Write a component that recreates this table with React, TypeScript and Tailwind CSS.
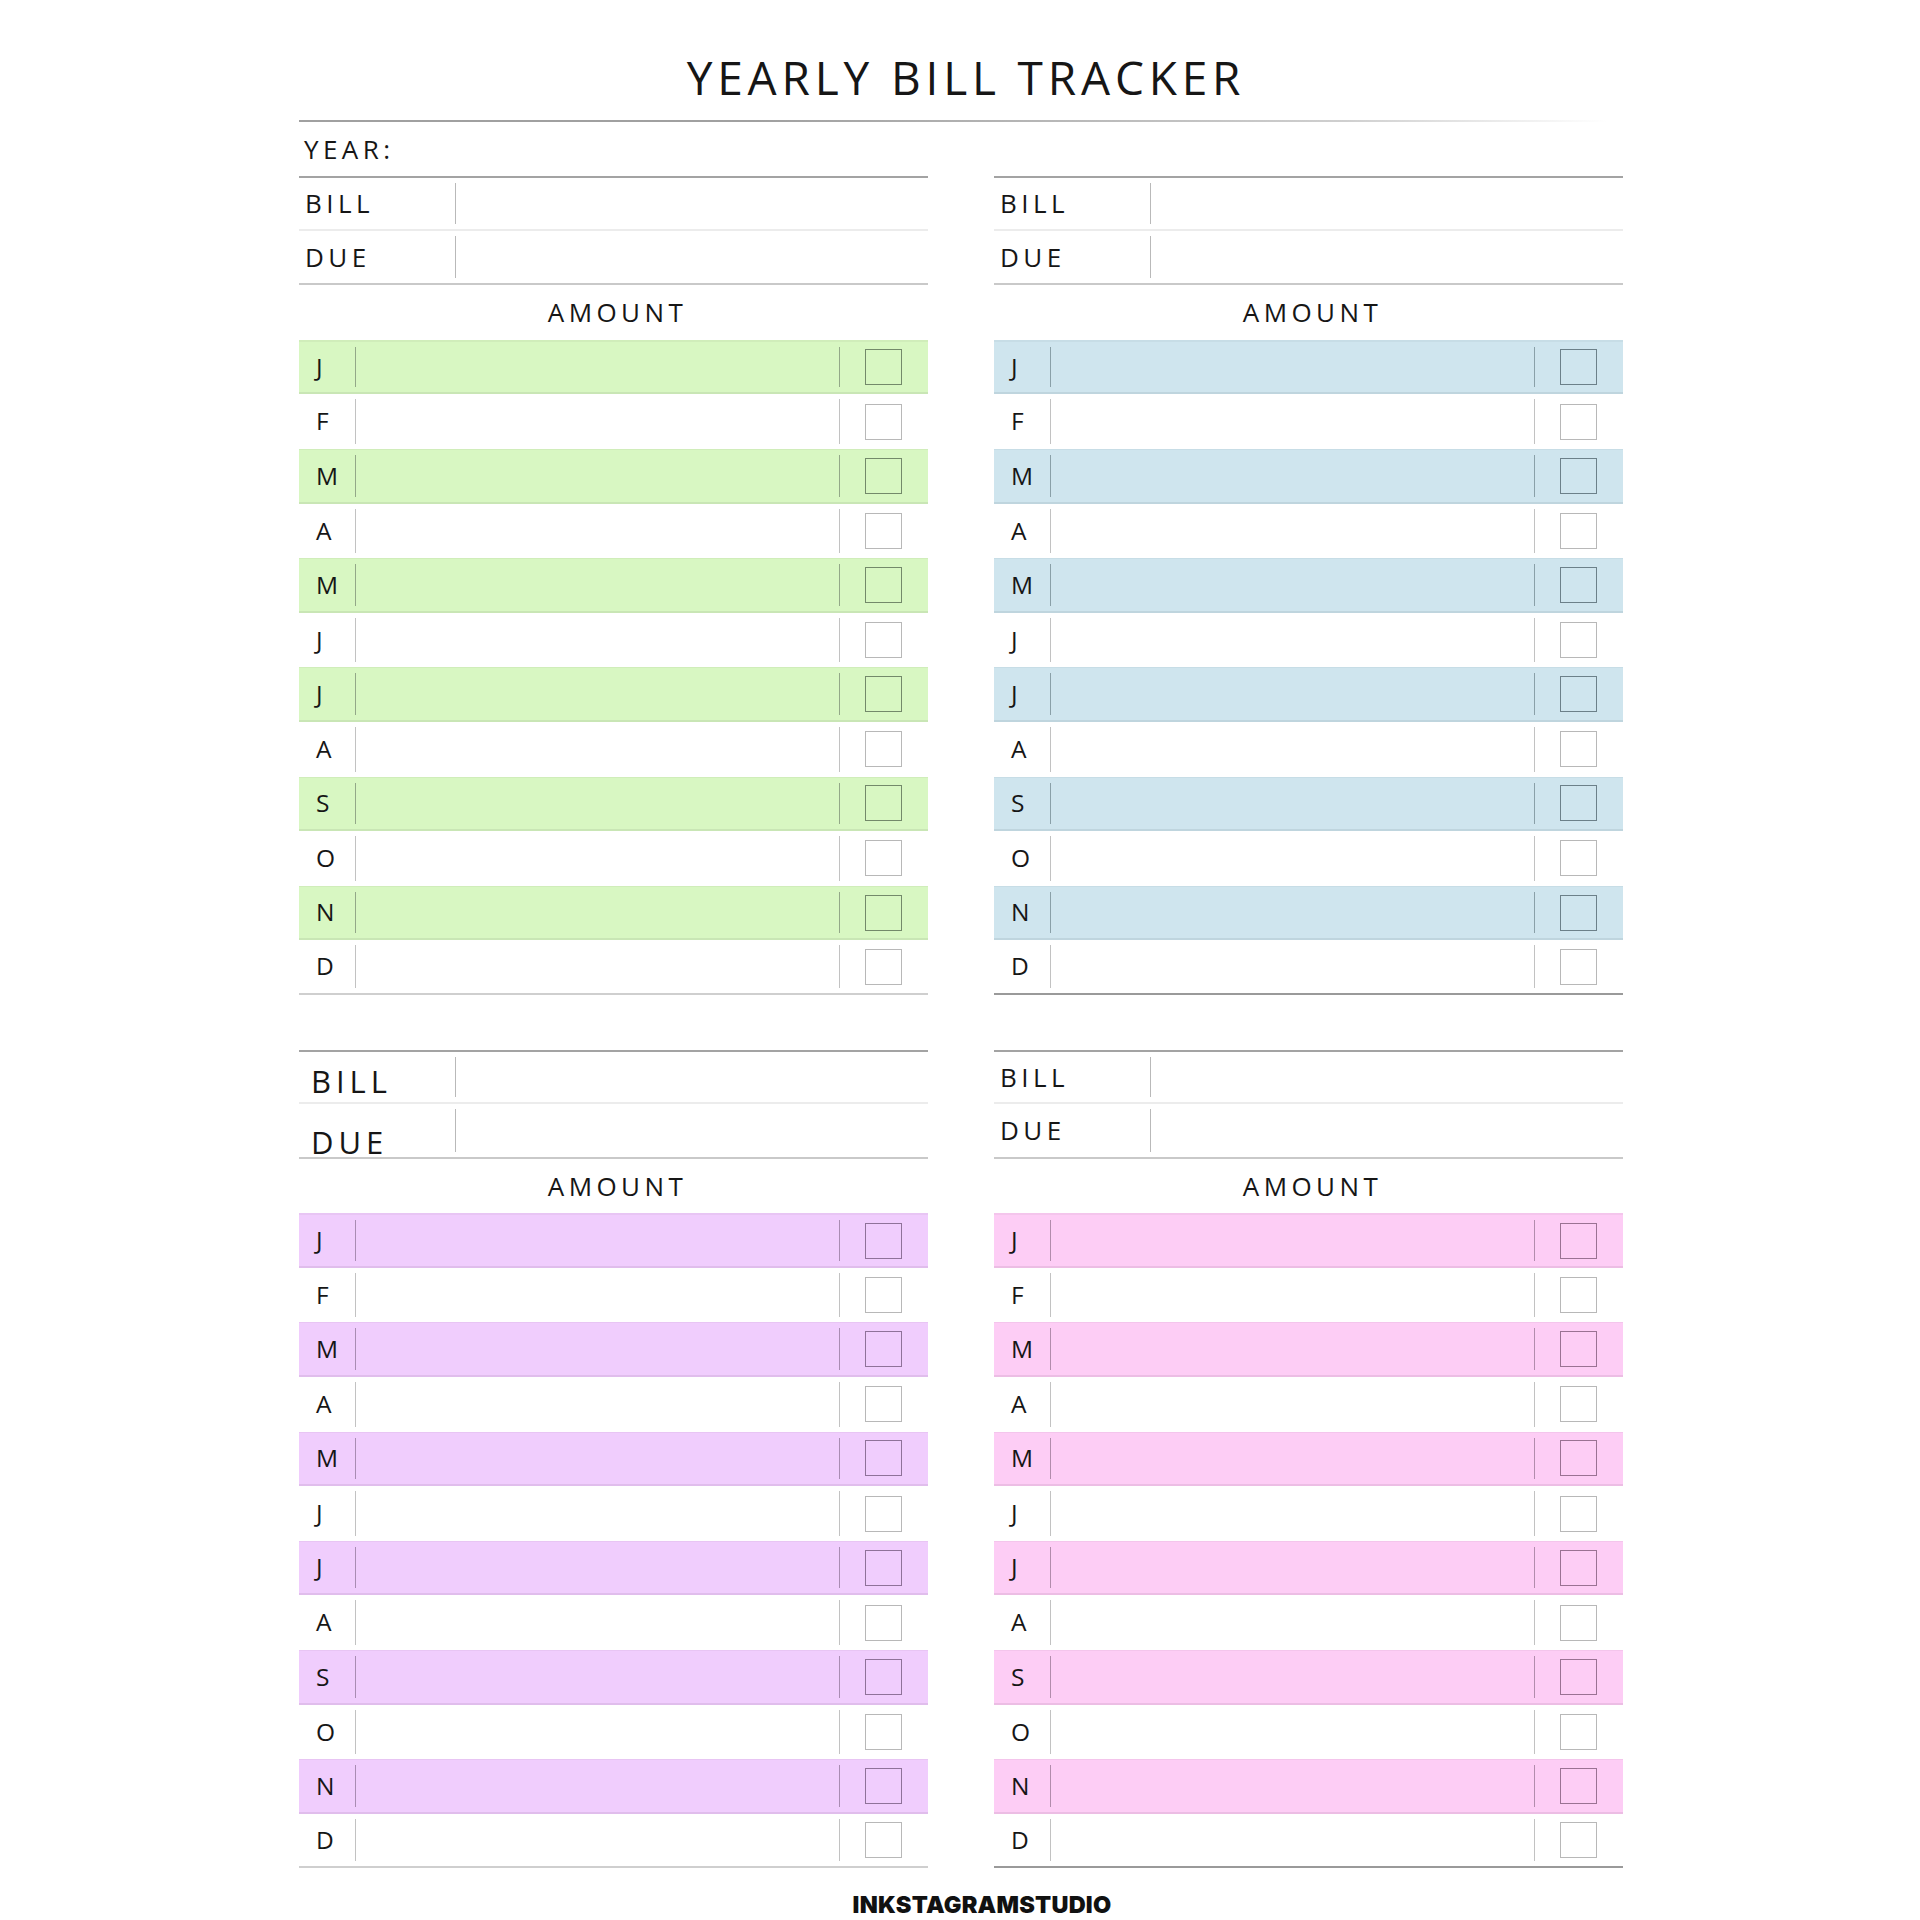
import clsx from "clsx";

const months = ["J", "F", "M", "A", "M", "J", "J", "A", "S", "O", "N", "D"];

type Theme = {
  row: string;
  rule: string;
  box: string;
};

// one look per tracker block
const themes: Record<string, Theme> = {
  green: {
    row: "bg-[#d8f7c2] border-t border-b-2 border-t-[#d0edba] border-b-[#c9e6b5]",
    rule: "bg-[#93a888]",
    box: "border-[#73896a]",
  },
  blue: {
    row: "bg-[#cfe5ee] border-t border-b-2 border-t-[#c7dde6] border-b-[#bfd5de]",
    rule: "bg-[#8aa0a8]",
    box: "border-[#6c8089]",
  },
  purple: {
    row: "bg-[#f0cdfd] border-t border-b-2 border-t-[#e8c5f4] border-b-[#e0bdec]",
    rule: "bg-[#a98cb3]",
    box: "border-[#8f7299]",
  },
  pink: {
    row: "bg-[#fdcdf5] border-t border-b-2 border-t-[#f4c5ec] border-b-[#ecbde4]",
    rule: "bg-[#b28cac]",
    box: "border-[#9a7293]",
  },
};

function MonthRow({
  letter,
  shaded,
  theme,
  first,
  last,
  darkEnd,
}: {
  letter: string;
  shaded: boolean;
  theme: Theme;
  first: boolean;
  last: boolean;
  darkEnd: boolean;
}) {
  return (
    <div
      className={clsx(
        "flex h-[54.6px] items-stretch",
        shaded ? theme.row : "bg-white",
        first && "border-t-2 border-t-[#a0a69c]",
        last && "border-b-2",
        last && (darkEnd ? "border-b-[#9a9a9a]" : "border-b-[#cfcfcf]")
      )}
    >
      <div className="flex w-[56px] items-center pl-[17px] text-[24.5px] leading-none text-[#161616]">
        {letter}
      </div>
      <div className={clsx("my-[5px] w-px", shaded ? theme.rule : "bg-[#c2c2c2]")} />
      <div className="flex-1" />
      <div className={clsx("my-[5px] w-px", shaded ? theme.rule : "bg-[#c2c2c2]")} />
      <div className="flex w-[88px] items-center justify-center pr-[2px]">
        <div className={clsx("h-[36px] w-[37px] border", shaded ? theme.box : "border-[#b8b8b8]")} />
      </div>
    </div>
  );
}

function FieldRow({
  label,
  big,
  pushDown,
  className,
}: {
  label: string;
  big?: boolean;
  pushDown?: string;
  className: string;
}) {
  return (
    <div className={clsx("flex h-[54.6px] items-stretch", className)}>
      <div
        className={clsx(
          "flex w-[156px] items-center leading-none text-[#161616]",
          big ? "pl-[12px] text-[31px] tracking-[0.16em]" : "pl-[6px] text-[26px] tracking-[0.17em]",
          pushDown
        )}
      >
        {label}
      </div>
      <div className="my-[5px] w-px bg-[#b9b9b9]" />
      <div className="flex-1" />
    </div>
  );
}

function Tracker({ theme, big, darkEnd }: { theme: Theme; big?: boolean; darkEnd?: boolean }) {
  return (
    <div className="flex flex-col">
      <FieldRow
        label="BILL"
        big={big}
        pushDown={big ? "pt-[9px]" : undefined}
        className="border-t-2 border-b-2 border-t-[#a3a3a3] border-b-[#ececec]"
      />
      <FieldRow
        label="DUE"
        big={big}
        pushDown={big ? "pt-[25px]" : undefined}
        className="border-b-2 border-b-[#c9c9c9]"
      />
      <div className="flex h-[54.6px] items-center justify-center pl-[8px] text-[26px] leading-none tracking-[0.17em] text-[#161616]">
        AMOUNT
      </div>
      {months.map((m, i) => (
        <MonthRow
          key={i}
          letter={m}
          shaded={i % 2 === 0}
          theme={theme}
          first={i === 0}
          last={i === months.length - 1}
          darkEnd={!!darkEnd}
        />
      ))}
    </div>
  );
}

export default function App() {
  return (
    <div className="h-[1920px] w-[1920px] overflow-hidden bg-white font-['Open_Sans',sans-serif] text-[#161616]">
      <div className="ml-[299px] w-[1324px]">
        <h1 className="pt-[54px] pl-[10px] text-center text-[46px] font-normal leading-[46px] tracking-[0.105em]">
          YEARLY BILL TRACKER
        </h1>
        <div className="mt-[20px] h-[2px] w-[1308px] bg-linear-to-r from-[#a0a0a0] from-35% via-[#cfcfcf] via-80% to-[#ffffff]" />
        <div className="flex h-[54px] items-center pl-[5px] text-[26px] leading-none tracking-[0.17em]">
          YEAR:
        </div>

        <div className="grid grid-cols-2 gap-x-[66px]">
          <Tracker theme={themes.green} />
          <Tracker theme={themes.blue} darkEnd />
        </div>

        <div className="h-[54.6px]" />

        <div className="grid grid-cols-2 gap-x-[66px]">
          <Tracker theme={themes.purple} big />
          <Tracker theme={themes.pink} darkEnd />
        </div>

        <div className="pt-[26px] pl-[42px] text-center font-['Inter',sans-serif] text-[23.5px] font-black leading-[22px] tracking-[0.01em] text-[#111]">
          INKSTAGRAMSTUDIO
        </div>
      </div>
    </div>
  );
}
